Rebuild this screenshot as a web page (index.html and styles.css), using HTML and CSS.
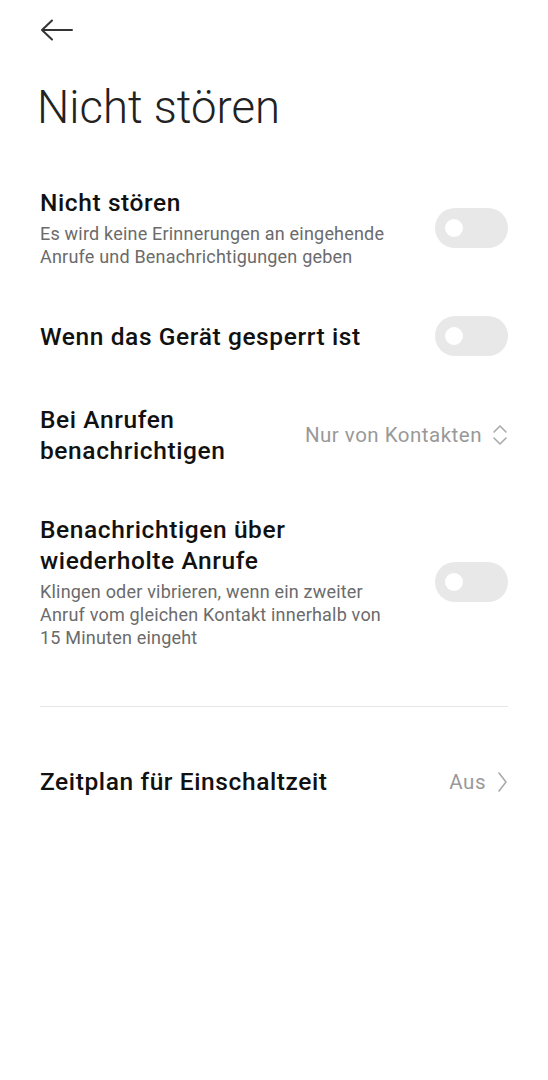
FILE: index.html
```html
<!DOCTYPE html>
<html lang="de">
<head>
    <meta charset="UTF-8">
    <meta name="viewport" content="width=device-width, initial-scale=1.0">
    <title>Nicht stören</title>
    <link rel="stylesheet" href="styles.css">
</head>
<body>
    <header class="topbar">
        <svg class="back" width="34" height="24" viewBox="0 0 34 24">
            <path d="M2 12 H32 M12 2.5 L2 12 L12 21.5" fill="none" stroke="#333" stroke-width="2" stroke-linecap="round" stroke-linejoin="round"/>
        </svg>
    </header>

    <h1 class="page-title">Nicht stören</h1>

    <div class="list">
        <div class="row">
            <div class="text">
                <div class="title">Nicht stören</div>
                <div class="sub">Es wird keine Erinnerungen an eingehende Anrufe und Benachrichtigungen geben</div>
            </div>
            <div class="toggle"><span class="knob"></span></div>
        </div>

        <div class="row">
            <div class="text">
                <div class="title">Wenn das Gerät gesperrt ist</div>
            </div>
            <div class="toggle"><span class="knob"></span></div>
        </div>

        <div class="row">
            <div class="text narrow">
                <div class="title">Bei Anrufen benachrichtigen</div>
            </div>
            <div class="value">
                Nur von Kontakten
                <svg width="16" height="24" viewBox="0 0 16 24">
                    <path d="M2 9 L8 3 L14 9 M2 15 L8 21 L14 15" fill="none" stroke="#aaa" stroke-width="1.6" stroke-linecap="round" stroke-linejoin="round"/>
                </svg>
            </div>
        </div>

        <div class="row">
            <div class="text">
                <div class="title">Benachrichtigen über wiederholte Anrufe</div>
                <div class="sub">Klingen oder vibrieren, wenn ein zweiter Anruf vom gleichen Kontakt innerhalb von 15 Minuten eingeht</div>
            </div>
            <div class="toggle"><span class="knob"></span></div>
        </div>
    </div>

    <hr class="divider">

    <div class="list second">
        <div class="row">
            <div class="text">
                <div class="title">Zeitplan für Einschaltzeit</div>
            </div>
            <div class="value">
                Aus
                <svg width="12" height="24" viewBox="0 0 12 24">
                    <path d="M3 3 L10 12 L3 21" fill="none" stroke="#aaa" stroke-width="1.6" stroke-linecap="round" stroke-linejoin="round"/>
                </svg>
            </div>
        </div>
    </div>
</body>
</html>
```

FILE: styles.css
```css
body {
    margin: 0;
    padding: 0 40px;
    background-color: #ffffff;
    font-family: Roboto, "Noto Sans", Arial, sans-serif;
    color: #111;
}
.topbar {
    height: 60px;
    display: flex;
    align-items: center;
}
.back {
    display: block;
}
.page-title {
    margin: 20px 0 0 -3px;
    font-size: 45.5px;
    line-height: 56px;
    font-weight: 300;
    color: #222;
}
.list {
    margin-top: 27px;
}
.list.second {
    margin-top: 35px;
}
.row {
    display: flex;
    align-items: center;
    justify-content: space-between;
    padding: 24px 0;
}
.text {
    flex: 1;
    padding-right: 24px;
}
.text.narrow {
    max-width: 230px;
}
.title {
    font-size: 24.5px;
    line-height: 31px;
    font-weight: 500;
    letter-spacing: 0.6px;
    color: #111;
}
.sub {
    margin-top: 4px;
    font-size: 18px;
    line-height: 23px;
    letter-spacing: 0.2px;
    color: #6b6b6b;
    max-width: 362px;
}
.toggle {
    position: relative;
    flex: none;
    width: 73px;
    height: 40px;
    border-radius: 20px;
    background-color: #e8e8e8;
}
.knob {
    position: absolute;
    left: 10px;
    top: 11px;
    width: 18px;
    height: 18px;
    border-radius: 50%;
    background-color: #fff;
}
.value {
    flex: none;
    display: flex;
    align-items: center;
    gap: 10px;
    font-size: 20.5px;
    letter-spacing: 0.5px;
    color: #999;
}
.divider {
    margin: 33px 0 0 0;
    border: none;
    border-top: 1px solid #e6e6e6;
}
```
